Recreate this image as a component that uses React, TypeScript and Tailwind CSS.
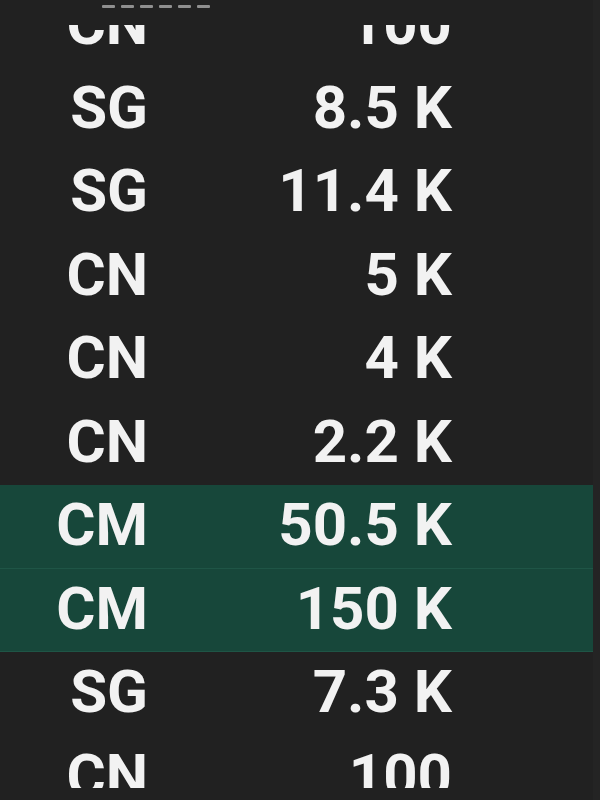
const rows: { code: string; value: string; hot?: boolean }[] = [
  { code: "CN", value: "100" },
  { code: "SG", value: "8.5 K" },
  { code: "SG", value: "11.4 K" },
  { code: "CN", value: "5 K" },
  { code: "CN", value: "4 K" },
  { code: "CN", value: "2.2 K" },
  { code: "CM", value: "50.5 K", hot: true },
  { code: "CM", value: "150 K", hot: true },
  { code: "SG", value: "7.3 K" },
  { code: "CN", value: "100" },
];

export default function App() {
  return (
    <div className="w-[600px] h-[800px] bg-[#212121] flex overflow-hidden font-['Roboto',sans-serif] text-[#f2f2f2]">
      <div className="relative w-[593px] h-[788px] overflow-hidden">
        <div className="-mt-[16px] flex flex-col">
          {rows.map((r, i) => (
            <div
              key={i}
              className={
                r.hot
                  ? "flex h-[83.5px] bg-[#17473a] border-b border-[#1f5546] text-[60px] leading-[70px] font-bold"
                  : "flex h-[83.5px] text-[60px] leading-[70px] font-bold"
              }
            >
              <div className="w-[148px] text-right pt-[5px]">{r.code}</div>
              <div className="w-[304px] text-right pt-[5px]">{r.value}</div>
            </div>
          ))}
        </div>
        {/* sticky header remnant */}
        <div className="absolute top-0 left-0 right-0 h-[25px] bg-[#212121]">
          <div className="ml-[102px] mt-[5px] flex gap-[6px]">
            {[0, 1, 2, 3, 4, 5].map((d) => (
              <span key={d} className="w-[13px] h-[3px] bg-[#8f8f8f] rounded-[1px]" />
            ))}
          </div>
        </div>
      </div>
      <div className="flex-1 bg-[#242424]" />
    </div>
  );
}
